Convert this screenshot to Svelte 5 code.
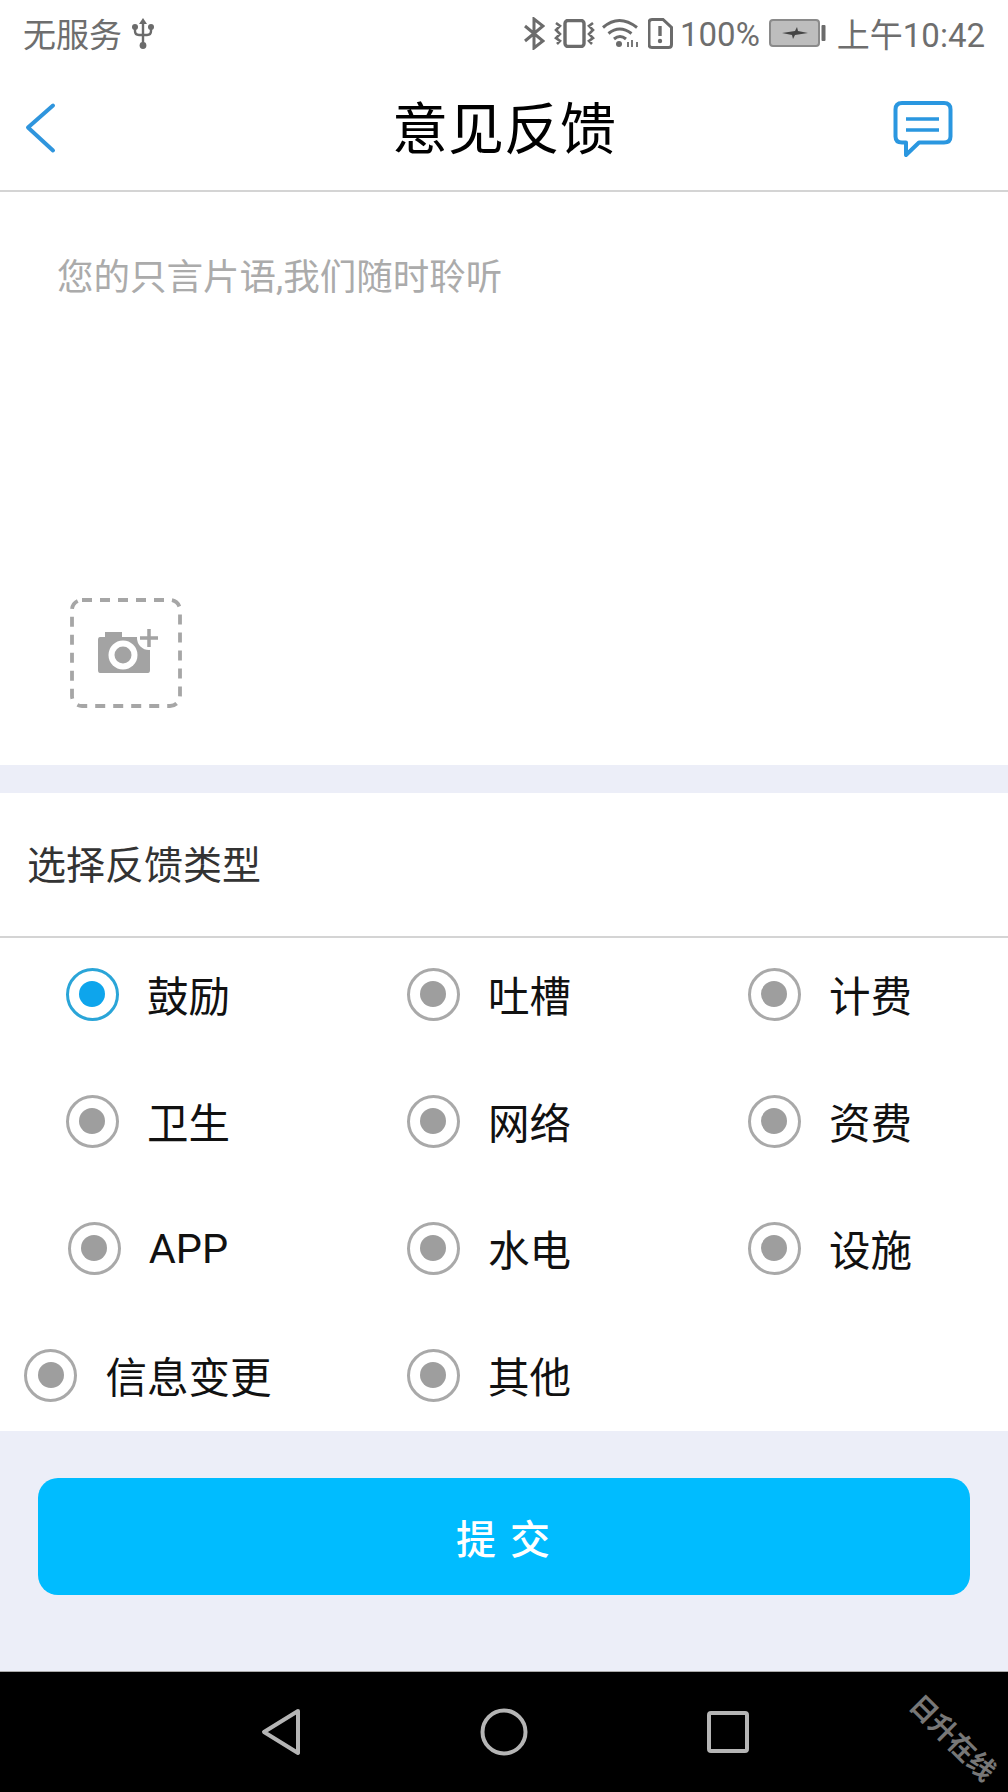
<script lang="ts">
  const feedbackTypes = ['鼓励', '吐槽', '计费', '卫生', '网络', '资费', 'APP', '水电', '设施', '信息变更', '其他'];
  let selected = $state('鼓励');
</script>

<div class="page">
  <div class="status">
    <div class="status-left">
      <span>无服务</span>
      <svg class="usb" width="22" height="33" viewBox="0 0 22 33" fill="none">
        <path d="M11 1l-4 6h8z" fill="#6b6b6b" />
        <path d="M11 5v23M3 11v3q0 4 4 4h8q4 0 4-4v-3" stroke="#6b6b6b" stroke-width="2.4" />
        <circle cx="11" cy="28.5" r="3.4" fill="#6b6b6b" />
        <circle cx="3" cy="10" r="3" fill="#6b6b6b" />
        <circle cx="19" cy="10" r="3" fill="#6b6b6b" />
      </svg>
    </div>
    <div class="status-right">
      <svg class="ic-bt" width="22" height="33" viewBox="0 0 22 33" fill="none" stroke="#6b6b6b" stroke-width="3">
        <path d="M2 9l18 15-9 7V2l9 7L2 24" />
      </svg>
      <svg class="ic-vib" width="41" height="29" viewBox="0 0 41 29" fill="none" stroke="#6b6b6b" stroke-width="2.6">
        <rect x="11" y="1.5" width="19" height="26" rx="3" stroke-width="3.4" />
        <path d="M2 4l4 3-4 4 4 4-4 4 4 3-3 3M39 4l-4 3 4 4-4 4 4 4-4 3 3 3" />
      </svg>
      <svg class="ic-wifi" width="38" height="30" viewBox="0 0 38 30" fill="none" stroke="#6b6b6b" stroke-width="3">
        <path d="M1 9.5q16-14 34 0M6.5 15.5q11-9 23 0M12 21q6-5 12 0" />
        <circle cx="17" cy="26" r="3" fill="#6b6b6b" stroke="none" />
        <path d="M26 24v5M30 22v7M35 24v5" stroke-width="1.8" />
      </svg>
      <svg class="ic-sim" width="25" height="31" viewBox="0 0 25 31" fill="none">
        <path d="M4 1.5h11l8.5 8v17q0 3-3 3H4q-3 0-3-3v-22q0-3 3-3z" stroke="#6b6b6b" stroke-width="3" />
        <path d="M12 8v10" stroke="#6b6b6b" stroke-width="3.4" />
        <circle cx="12" cy="23" r="2.2" fill="#6b6b6b" />
      </svg>
      <span class="pct">100%</span>
      <svg class="ic-batt" width="58" height="28" viewBox="0 0 58 28" fill="none">
        <rect x="1" y="1" width="49" height="26" rx="3" fill="#bdbdbd" stroke="#8a8a8a" stroke-width="2" />
        <path d="M13 14l13-2 2-4 1 4 10 2-13 2-2 4-1-4z" fill="#444" />
        <rect x="52.5" y="6" width="4" height="16" rx="1" fill="#6b6b6b" />
      </svg>
      <span class="time">上午10:42</span>
    </div>
  </div>

  <header class="header">
    <svg class="back" width="36" height="56" viewBox="0 0 36 56" fill="none">
      <path d="M30 3.5L5 25.5 30 48.5" stroke="#2f95dd" stroke-width="4" stroke-linecap="round" stroke-linejoin="round" />
    </svg>
    <h1>意见反馈</h1>
    <svg class="msg" width="60" height="58" viewBox="0 0 60 58" fill="none">
      <path d="M9 2h42q6.5 0 6.5 6.5v27q0 6-6.5 6H26L13 54V41.5H9q-6.5 0-6.5-6v-27Q2.500 2 9 2z" stroke="#2a97e0" stroke-width="4" stroke-linejoin="round" />
      <path d="M13 18h33M13 29h33" stroke="#2a97e0" stroke-width="3.5" />
    </svg>
  </header>

  <section class="compose">
    <p class="placeholder">您的只言片语,我们随时聆听</p>
    <svg class="upload" width="116" height="114" viewBox="0 0 116 114" fill="none">
      <rect x="4" y="4" width="108" height="106" rx="10" stroke="#a6a6a6" stroke-width="3.8" stroke-dasharray="10 8" />
      <path d="M30 44q0-3 2-3h5v-5h17v5h16q12 0 12 10v23q0 3-2 3H32q-2 0-2-3z" fill="#a3a3a3" />
      <circle cx="55" cy="59" r="14.5" fill="#fff" />
      <circle cx="55" cy="59" r="8.5" fill="#a3a3a3" />
      <circle cx="81" cy="42" r="12" fill="#fff" />
      <path d="M81 33v18M72 42h18" stroke="#a3a3a3" stroke-width="3.5" />
    </svg>
  </section>

  <div class="band"></div>

  <section class="types">
    <h2>选择反馈类型</h2>
    <div class="grid">
      {#each feedbackTypes as type}
        <button class="option" class:active={selected === type} onclick={() => (selected = type)}>
          <span class="radio"><span class="dot"></span></span>
          <span class="label">{type}</span>
        </button>
      {/each}
    </div>
  </section>

  <div class="footer">
    <button class="submit">提 交</button>
  </div>

  <nav class="navbar">
    <svg width="40" height="48" viewBox="0 0 40 48" fill="none">
      <path d="M37 3L3 24l34 21z" stroke="#b5b5b5" stroke-width="4" stroke-linejoin="round" />
    </svg>
    <svg width="48" height="48" viewBox="0 0 48 48" fill="none">
      <circle cx="24" cy="24" r="21.5" stroke="#b5b5b5" stroke-width="4" />
    </svg>
    <svg width="42" height="42" viewBox="0 0 42 42" fill="none">
      <rect x="2" y="2" width="38" height="38" rx="2" stroke="#b5b5b5" stroke-width="4" />
    </svg>
    <span class="watermark">日升在线</span>
  </nav>
</div>

<style>
  :global(body) {
    margin: 0;
    background: #fff;
  }

  .page {
    width: 1008px;
    height: 1792px;
    display: flex;
    flex-direction: column;
    font-family: Roboto, "Noto Sans CJK SC", sans-serif;
    overflow: hidden;
  }

  /* status bar */
  .status {
    height: 68px;
    padding: 0 23px 2px 23px;
    box-sizing: border-box;
    display: flex;
    align-items: center;
    justify-content: space-between;
    font-size: 33px;
    color: #6e6e6e;
  }

  .status-left,
  .status-right {
    display: flex;
    align-items: center;
  }

  .usb {
    margin-left: 10px;
  }

  .ic-vib {
    margin-left: 9px;
  }

  .ic-wifi {
    margin-left: 7px;
  }

  .ic-sim {
    margin-left: 8px;
  }

  .pct {
    margin: 3px 0 0 7px;
  }

  .ic-batt {
    margin-left: 9px;
  }

  .time {
    margin-left: 10px;
  }

  /* header */
  .header {
    height: 124px;
    box-sizing: border-box;
    padding-top: 2px;
    border-bottom: 2px solid #d4d4d4;
    display: grid;
    grid-template-columns: 1fr auto 1fr;
    align-items: center;
  }

  .header h1 {
    margin: 0;
    font-size: 56px;
    font-weight: 400;
    color: #000;
    line-height: 1;
  }

  .back {
    margin-left: 23px;
  }

  .msg {
    justify-self: end;
    margin-right: 55px;
  }

  /* compose */
  .compose {
    height: 573px;
    box-sizing: border-box;
    padding: 0 0 55px 68px;
    display: flex;
    flex-direction: column;
    justify-content: space-between;
  }

  .placeholder {
    margin: 62px 0 0 -11px;
    font-size: 36.5px;
    line-height: 48px;
    color: #ababab;
  }

  .band {
    height: 28px;
    background: #eceef8;
  }

  /* type list */
  .types h2 {
    margin: 0;
    height: 145px;
    box-sizing: border-box;
    padding: 0 0 6px 27px;
    border-bottom: 2px solid #d4d4d4;
    display: flex;
    align-items: center;
    font-size: 39px;
    font-weight: 400;
    color: #333;
  }

  .grid {
    display: grid;
    grid-template-columns: repeat(3, 296px);
    column-gap: 45px;
    grid-auto-rows: 112px;
    row-gap: 15px;
  }

  .option {
    border: none;
    background: none;
    padding: 0;
    display: flex;
    align-items: center;
    justify-content: center;
    gap: 28px;
    font: inherit;
    font-size: 41.5px;
    color: #111;
  }

  .radio {
    width: 53px;
    height: 53px;
    box-sizing: border-box;
    border: 3.5px solid #a9a9a9;
    border-radius: 50%;
    display: flex;
    align-items: center;
    justify-content: center;
  }

  .dot {
    width: 26px;
    height: 26px;
    border-radius: 50%;
    background: #9e9e9e;
  }

  .option.active .radio {
    border-color: #2aa5d8;
  }

  .option.active .dot {
    background: #0ea5ec;
  }

  /* footer */
  .footer {
    flex: 1;
    background: #eceef8;
    padding: 47px 38px 0;
    border-bottom: 1px solid #aaa;
  }

  .submit {
    width: 100%;
    height: 117px;
    border: none;
    border-radius: 20px;
    background: #00bcff;
    color: #fff;
    font: inherit;
    font-size: 40px;
    font-weight: 500;
    letter-spacing: 2px;
  }

  /* android nav */
  .navbar {
    height: 120px;
    background: #000;
    flex-shrink: 0;
    display: flex;
    align-items: center;
    padding: 0 259px 0 261px;
    box-sizing: border-box;
    justify-content: space-between;
    position: relative;
  }

  .watermark {
    position: absolute;
    left: 900px;
    top: 45px;
    transform: rotate(45deg);
    font-size: 27px;
    font-weight: 700;
    color: #777;
    white-space: nowrap;
  }
</style>
